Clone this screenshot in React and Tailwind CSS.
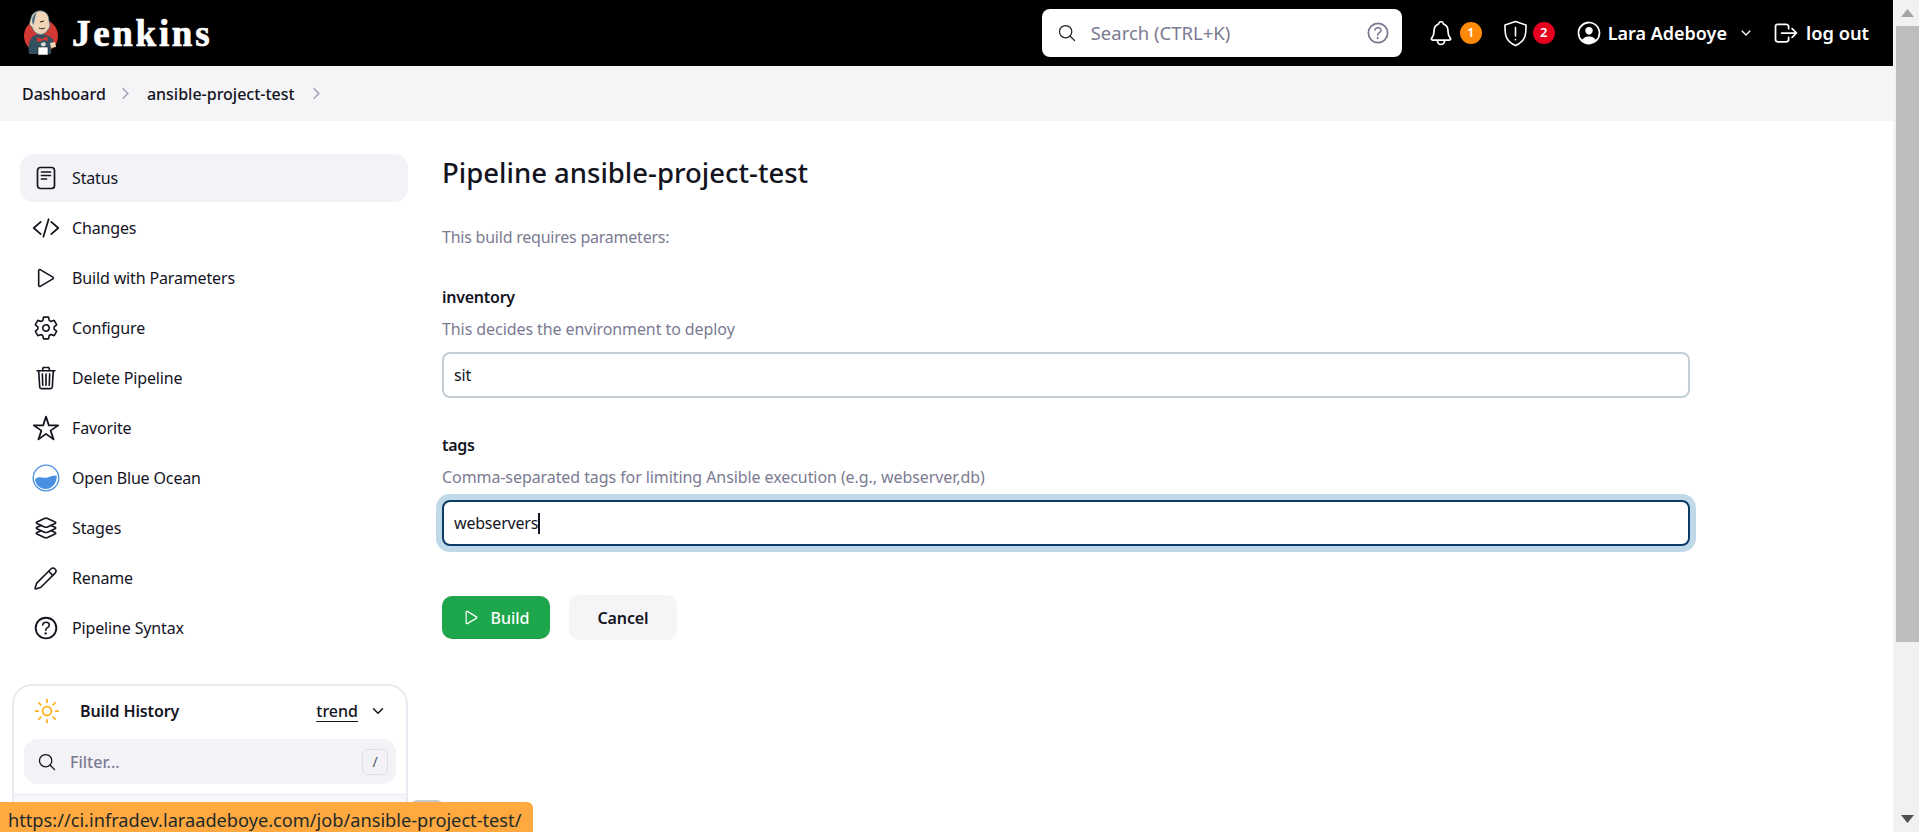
import {
  IoCodeSlashOutline,
  IoPlayOutline,
  IoSettingsOutline,
  IoTrashOutline,
  IoStarOutline,
  IoLayersOutline,
  IoHelpCircleOutline,
  IoSearchOutline,
  IoNotificationsOutline,
  IoPersonCircleOutline,
  IoLogOutOutline,
  IoChevronDown,
  IoChevronForward,
  IoSunnyOutline,
} from 'react-icons/io5';
import { Pencil } from 'lucide-react';

const JenkinsLogo = () => (
  <svg width="38" height="46" viewBox="0 0 38 46" className="shrink-0">
    <circle cx="18" cy="26" r="17" fill="#d33833" />
    <path d="M6 44c-1-8 0-14 4-18l6-2 8 1 6 4 1 7-3 2v6H6z" fill="#335061" />
    <path d="M8 8c1-5 6-8 11-7 5 1 7 5 7 10l1 4c0 3-2 4-3 6-2 3-6 4-9 3-3-1-5-4-6-7-2-1-3-3-2-5 0-2 1-3 1-4z" fill="#f0d6b7" stroke="#49728b" strokeWidth="0.8" />
    <path d="M9 11c0-4 2-7 5-9-2 4-2 7-3 11l-1 2-1-4z" fill="#49728b" />
    <path d="M17 12l4-1M22 18c-2 1-4 1-6 0" stroke="#231f20" strokeWidth="1" fill="none" />
    <path d="M14 27l5 2 5-3 1 5-5-1-1 1-5 1z" fill="#d33833" />
    <path d="M18 33l4-1 1 3-3 2-2-2z" fill="#dcd9d8" />
    <path d="M15 37h10v8H15z" fill="#fff" stroke="#231f20" strokeWidth="0.6" />
    <path d="M27 33l5-1 1 5-5 1z" fill="#f0d6b7" />
  </svg>
);

const StatusIcon = () => (
  <svg width="20" height="24" viewBox="0 0 20 24" fill="none" stroke="currentColor" strokeWidth="1.7" strokeLinecap="round">
    <rect x="1.5" y="1.5" width="17" height="21" rx="3" />
    <path d="M5.5 6h9M5.5 9.5h9M5.5 13h5" />
  </svg>
);

const OceanIcon = () => (
  <svg width="28" height="28" viewBox="0 0 28 28" className="ml-[1px]">
    <circle cx="14" cy="14" r="12.8" fill="#fff" stroke="#4a90e2" strokeWidth="1.3" />
    <path d="M3.200 15c3-3 6-1.500 9.500-1.300 4 .2 7-2.400 12-2.200.6 7-4.500 13.500-10.700 13.500S3 20.500 3.200 15z" fill="#4a90e2" />
  </svg>
);

const ShieldIcon = () => (
  <svg width="25" height="27" viewBox="0 0 25 27" fill="none" stroke="#fff" strokeWidth="1.600" strokeLinecap="round" strokeLinejoin="round">
    <path d="M12.500 1.500l10.500 3.500c0 8 .5 16-10.500 20.500C1.500 21 2 13 2 5z" />
    <path d="M12.500 7.500v8.500M12.500 19.500v.2" />
  </svg>
);

const menuItems = [
  { label: 'Status', icon: <StatusIcon />, active: true },
  { label: 'Changes', icon: <IoCodeSlashOutline size={28} /> },
  { label: 'Build with Parameters', icon: <IoPlayOutline size={26} /> },
  { label: 'Configure', icon: <IoSettingsOutline size={26} /> },
  { label: 'Delete Pipeline', icon: <IoTrashOutline size={26} /> },
  { label: 'Favorite', icon: <IoStarOutline size={28} /> },
  { label: 'Open Blue Ocean', icon: <OceanIcon /> },
  { label: 'Stages', icon: <IoLayersOutline size={26} /> },
  { label: 'Rename', icon: <Pencil size={25} strokeWidth={1.5} /> },
  { label: 'Pipeline Syntax', icon: <IoHelpCircleOutline size={30} /> },
];

const Header = () => (
  <header className="h-[66px] shrink-0 bg-black flex items-center pl-[23px] text-white">
    <JenkinsLogo />
    <span className="ml-[11px] text-[37px] font-bold tracking-[2.7px] [-webkit-text-stroke:0.7px_white] font-['Liberation_Serif',serif] leading-none">Jenkins</span>

    <div className="ml-auto w-[360px] h-[48px] bg-white rounded-lg flex items-center pl-[15px] pr-[10px] text-[#7b7b92]">
      <IoSearchOutline size={20} className="text-[#222]" />
      <span className="ml-[14px] text-[18.500px]">Search (CTRL+K)</span>
      <IoHelpCircleOutline size={28} className="ml-auto text-[#77778f]" />
    </div>

    <IoNotificationsOutline size={28} className="ml-[25px]" />
    <span className="ml-[5px] w-[22px] h-[22px] rounded-full bg-[#ff8a0a] text-[13px] font-semibold flex items-center justify-center">1</span>
    <div className="ml-[21px]"><ShieldIcon /></div>
    <span className="ml-[5px] w-[22px] h-[22px] rounded-full bg-[#e6001f] text-[13px] font-semibold flex items-center justify-center">2</span>
    <IoPersonCircleOutline size={28} className="ml-[20px]" />
    <span className="ml-[5px] text-[18px] font-semibold">Lara Adeboye</span>
    <IoChevronDown size={14} className="ml-[12px]" />
    <IoLogOutOutline size={28} className="ml-[19px]" />
    <span className="ml-[6px] mr-[24px] text-[18.300px] font-semibold">log out</span>
  </header>
);

const Breadcrumbs = () => (
  <nav className="h-[55px] shrink-0 bg-[#f5f5f8] flex items-center pl-[22px] text-[16px] font-medium text-[#14141f]">
    <span>Dashboard</span>
    <IoChevronForward size={17} className="ml-[11px] mr-[13px] text-[#a3a3b8]" />
    <span>ansible-project-test</span>
    <IoChevronForward size={17} className="ml-[13px] text-[#a3a3b8]" />
  </nav>
);

const Sidebar = () => (
  <aside className="w-[442px] shrink-0 pt-[33px] pl-[12px] pr-[34px]">
    <div className="flex flex-col gap-[2px] pl-[8px]">
      {menuItems.map((item) => (
        <div
          key={item.label}
          className={`h-[48px] rounded-[14px] flex items-center text-[16px] tracking-[-0.15px] ${item.active ? 'bg-[#f2f2f7]' : ''}`}
        >
          <span className="w-[52px] flex items-center justify-center pr-[1px]">{item.icon}</span>
          <span>{item.label}</span>
        </div>
      ))}
    </div>

    <div className="mt-[32px] w-[396px] border-2 border-[#e9e9f1] rounded-[20px] bg-white">
      <div className="h-[53px] pb-[3px] flex items-center pl-[19px] pr-[20px]">
        <IoSunnyOutline size={28} className="text-[#ffb01f]" />
        <span className="ml-[19px] text-[16px] font-semibold tracking-[-0.1px]">Build History</span>
        <span className="ml-auto text-[16px] font-medium underline underline-offset-4">trend</span>
        <IoChevronDown size={16} className="ml-[12px]" />
      </div>
      <div className="mx-[10px] h-[45px] rounded-[14px] bg-[#f2f2f7] flex items-center pl-[13px] pr-[8px]">
        <IoSearchOutline size={20} />
        <span className="ml-[13px] text-[16px] font-medium text-[#7b7b92]">Filter...</span>
        <span className="ml-auto w-[26px] h-[26px] rounded-[6px] border border-[#dfdfe8] text-[14px] text-[#55556b] flex items-center justify-center">/</span>
      </div>
      <div className="mt-[10px] h-[40px] border-t border-[#e9e9f1] bg-[#f7f7f9]" />
    </div>
  </aside>
);

const Field = ({ name, help, value, focused }) => (
  <div>
    <div className="text-[16px] font-semibold leading-[22px] tracking-[-0.25px]">{name}</div>
    <div className="mt-[10px] text-[16px] leading-[22px] tracking-[-0.08px] text-[#7b7b92]">{help}</div>
    <div
      className={`mt-[12px] h-[46px] rounded-[8px] border-2 flex items-center pl-[10px] text-[16px] tracking-[-0.2px] bg-white ${
        focused ? 'border-[#0b3b66] ring-[6px] ring-[#c0d9e8]' : 'border-[#c3ced6]'
      }`}
    >
      <span>{value}</span>
      {focused && <span className="w-[2px] h-[21px] bg-[#14141f]" />}
    </div>
  </div>
);

const Main = () => (
  <main className="flex-1 min-w-0 pr-[203px] pt-[32px]">
    <h1 className="text-[27.500px] font-medium leading-[40px]">Pipeline ansible-project-test</h1>
    <p className="mt-[33px] text-[16px] leading-[22px] tracking-[-0.23px] text-[#7b7b92]">This build requires parameters:</p>
    <div className="mt-[38px] flex flex-col gap-[36px]">
      <Field name="inventory" help="This decides the environment to deploy" value="sit" />
      <Field name="tags" help="Comma-separated tags for limiting Ansible execution (e.g., webserver,db)" value="webservers" focused />
    </div>
    <div className="mt-[49px] flex items-center gap-[19px]">
      <button className="w-[108px] h-[43px] rounded-[10px] bg-[#1ea64c] text-white text-[16px] font-medium flex items-center justify-center gap-[9px]">
        <IoPlayOutline size={19} />
        Build
      </button>
      <button className="w-[108px] h-[45px] rounded-[10px] bg-[#f5f5f8] text-[16px] font-semibold tracking-[-0.1px]">Cancel</button>
    </div>
  </main>
);

const Scrollbar = () => (
  <div className="w-[26px] shrink-0 bg-[#f1f1f1] flex flex-col items-center pl-[2px] border-l border-[#f7f7f7]">
    <div className="h-[26px] flex items-center justify-center">
      <svg width="13" height="8" viewBox="0 0 13 8"><path d="M6.500 0L13 8H0z" fill="#a3a3a3" /></svg>
    </div>
    <div className="w-[23px] h-[616px] bg-[#bdbdbd]" />
    <div className="mt-auto h-[26px] flex items-center justify-center">
      <svg width="13" height="8" viewBox="0 0 13 8"><path d="M0 0h13L6.500 8z" fill="#505050" /></svg>
    </div>
  </div>
);

export default function App() {
  return (
    <div className="relative h-[832px] w-[1919px] overflow-hidden flex bg-white text-[#14141f] font-['Noto_Sans',sans-serif]">
      <div className="flex-1 min-w-0 flex flex-col">
        <Header />
        <Breadcrumbs />
        <div className="flex">
          <Sidebar />
          <Main />
        </div>
      </div>
      <Scrollbar />

      {/* browser link preview */}
      <div className="absolute left-[411px] top-[800px] w-[32px] h-[6px] rounded-t-[6px] bg-[#c9c9d2]" />
      <div className="absolute left-0 bottom-0 w-[533px] h-[30px] bg-[#ffa940] rounded-tr-[6px] pl-[8px] text-[18.200px] leading-[36px] text-[#1d2a2a] whitespace-nowrap overflow-hidden">
        https://ci.infradev.laraadeboye.com/job/ansible-project-test/
      </div>
    </div>
  );
}
